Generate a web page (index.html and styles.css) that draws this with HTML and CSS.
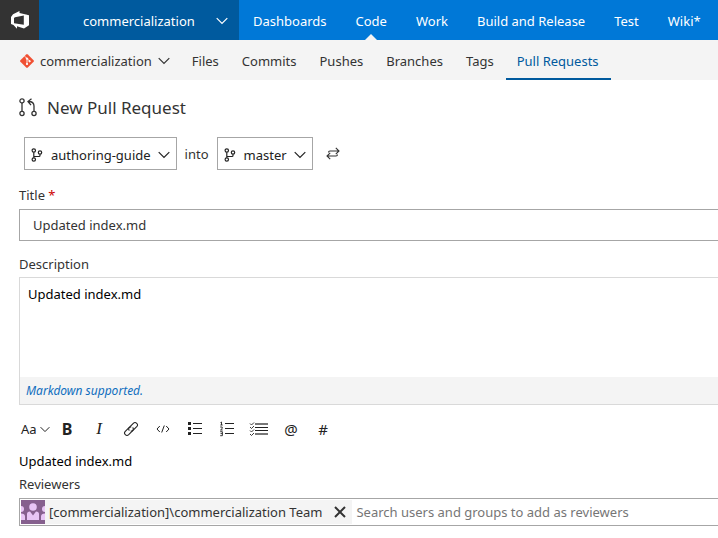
FILE: index.html
```html
<!DOCTYPE html>
<html lang="en">
<head>
<meta charset="utf-8">
<meta name="viewport" content="width=device-width, initial-scale=1">
<title>New Pull Request</title>
<link rel="stylesheet" href="styles.css">
</head>
<body>
<svg class="defs" aria-hidden="true">
  <symbol id="chevron" viewBox="0 0 12 8"><path d="M.7 1.200 6 6.500l5.300-5.300" fill="none" stroke="currentColor" stroke-width="1.200"/></symbol>
  <symbol id="branch" viewBox="0 0 12 14"><g fill="none" stroke="currentColor" stroke-width="1.200"><circle cx="2.800" cy="2.500" r="1.700"/><circle cx="2.800" cy="11.500" r="1.700"/><circle cx="9" cy="4.500" r="1.700"/><path d="M2.800 4.200v5.600M9 6.200v1.300q0 1-1 1H2.800"/></g></symbol>
</svg>
<header class="top">
  <a class="logo" href="#" aria-label="Home">
    <svg width="20" height="20" viewBox="0 0 20 20"><path fill="#fff" fill-rule="evenodd" d="M9.500 1v2L16 4.500l3 .8v10l-5 3.200-7-2.300v2.600L3.500 15l-2.500-1V7l2-2.700zM13.800 5.500 5 7.200 4 8v5.200l9.800 1.600z"/></svg>
  </a>
  <button class="project" type="button"><span>commercialization</span><svg class="chevron" width="12" height="8"><use href="#chevron"/></svg></button>
  <nav class="hubs" aria-label="Hubs">
    <a href="#">Dashboards</a>
    <a class="current" href="#">Code</a>
    <a href="#">Work</a>
    <a href="#">Build and Release</a>
    <a href="#">Test</a>
    <a href="#">Wiki*</a>
  </nav>
</header>
<div class="sub">
  <button class="repo" type="button">
    <svg width="14" height="14" viewBox="0 0 14 14"><path fill="#f05033" d="M6.200.4q.8-.7 1.600 0l5.800 5.800q.7.8 0 1.600l-5.800 5.800q-.8.700-1.600 0L.4 7.800q-.7-.8 0-1.600z"/><g fill="#fff" stroke="#fff"><path d="M4.800 2.300 7 4.500V10M7 4.500l2.500 2.500" fill="none" stroke-width=".9"/><circle cx="7" cy="4.600" r=".7"/><circle cx="7" cy="10" r=".7"/><circle cx="9.600" cy="7.200" r=".7"/></g></svg>
    <span>commercialization</span>
    <svg class="chevron" width="12" height="8"><use href="#chevron"/></svg>
  </button>
  <nav class="tabs" aria-label="Code">
    <a href="#">Files</a>
    <a href="#">Commits</a>
    <a href="#">Pushes</a>
    <a href="#">Branches</a>
    <a href="#">Tags</a>
    <a class="selected" href="#">Pull Requests</a>
  </nav>
</div>
<main>
  <h1>
    <svg width="18" height="20" viewBox="0 0 18 20"><g fill="none" stroke="currentColor" stroke-width="1.300"><circle cx="3" cy="2.900" r="2.100"/><circle cx="3" cy="15.500" r="2.100"/><circle cx="15" cy="15.500" r="2.100"/><path d="M3 5v8.400M15 13.400V8q0-4.500-5.500-4.500M12.500.8 9 3.500l3 3.600"/></g></svg>
    New Pull Request
  </h1>
  <div class="branches">
    <button class="picker" type="button"><svg width="12" height="14"><use href="#branch"/></svg><span>authoring-guide</span><svg class="chevron" width="12" height="8"><use href="#chevron"/></svg></button>
    <span class="into">into</span>
    <button class="picker" type="button"><svg width="12" height="14"><use href="#branch"/></svg><span>master</span><svg class="chevron" width="12" height="8"><use href="#chevron"/></svg></button>
    <button class="swap" type="button" aria-label="Swap branches"><svg width="14" height="14" viewBox="0 0 14 14"><path d="M2.500 5.500q0-1.500 1.500-1.500h9M9.800.8 13 4 9.800 7.200M11.500 7.500q0 1.500-1.500 1.500H1M4.200 5.800 1 9l3.200 3.200" fill="none" stroke="currentColor" stroke-width="1.100"/></svg></button>
  </div>
  <label class="label" for="title">Title <span class="required">*</span></label>
  <input class="title" id="title" type="text" value="Updated index.md" required>
  <label class="label" for="description">Description</label>
  <div class="editor">
    <textarea id="description">Updated index.md</textarea>
    <a class="hint" href="#">Markdown supported.</a>
  </div>
  <div class="toolbar" role="toolbar" aria-label="Formatting">
    <button class="size" type="button" aria-label="Header size">Aa<svg width="10" height="7"><use href="#chevron"/></svg></button>
    <button class="bold" type="button" aria-label="Bold">B</button>
    <button class="italic" type="button" aria-label="Italic">I</button>
    <button type="button" aria-label="Link"><svg width="16" height="16" viewBox="0 0 16 16"><g fill="none" stroke="currentColor" stroke-width="1.100"><path d="M6.300 9.700Q4.800 8 6.300 6.300l4-4q1.700-1.500 3.400 0t0 3.400L10 9.300q-1 1-2.300.7"/><path d="M9.700 6.300q1.500 1.700 0 3.400l-4 4q-1.700 1.500-3.400 0t0-3.400L6 6.700q1-1 2.300-.7"/></g></svg></button>
    <button type="button" aria-label="Code"><svg width="14" height="10" viewBox="0 0 14 10"><path d="M3.800 2 1 5l2.800 3M10.200 2 13 5l-2.800 3M8.300 1.500l-2.600 7" fill="none" stroke="currentColor"/></svg></button>
    <button type="button" aria-label="Bulleted list"><svg width="16" height="14" viewBox="0 0 16 14"><path fill="currentColor" d="M1 0h3v3H1zM1 5h3v3H1zM1 10h3v3H1zM6 1h9v1H6zM6 6h9v1H6zM6 11h9v1H6z"/></svg></button>
    <button type="button" aria-label="Numbered list"><svg width="16" height="16" viewBox="0 0 16 16"><path fill="currentColor" d="M6 2h9v1H6zM6 7h9v1H6zM6 12h9v1H6z"/><path d="M1.500 1.500 2.500 1v3M1.300 4h2.400M1.200 6h2v1.500L1.500 9h2.200M1.200 10.700h2.200v4H1.200M1.500 12.600h2" fill="none" stroke="currentColor" stroke-width=".9"/></svg></button>
    <button type="button" aria-label="Task list"><svg width="20" height="14" viewBox="0 0 20 14"><path fill="currentColor" d="M6 5h13v1H6zM6 8h13v1H6z"/><path fill="#777" d="M6 1h13v2H6zM6 11h13v2H6z"/><path d="M1 1.500 2.500 3 5 .5M1 5l1.500 1.500L5 4M1 8.500 2.500 10 5 7.500M1 12l1.500 1.500L5 11" fill="none" stroke="currentColor" stroke-width=".9"/></svg></button>
    <button class="glyph" type="button" aria-label="Mention">@</button>
    <button class="glyph" type="button" aria-label="Work item">#</button>
  </div>
  <p class="preview">Updated index.md</p>
  <label class="label" for="reviewers">Reviewers</label>
  <div class="reviewers">
    <div class="chip">
      <svg width="24" height="24" viewBox="0 0 24 24"><path fill="#86608e" d="M0 0h24v24H0z"/><g fill="#e8c5f5"><circle cx="12" cy="7" r="3.800"/><circle cx="0" cy="9" r="3"/><circle cx="24" cy="9" r="3"/><path d="M6 20v-6q0-2.500 3-2.500l3 4 3-4q3 0 3 2.500v6zM0 13.500q4 0 4 3V20H0zM24 13.500q-4 0-4 3V20h4z"/></g></svg>
      <span>[commercialization]\commercialization Team</span>
      <button type="button" aria-label="Remove reviewer"><svg width="12" height="12" viewBox="0 0 12 12"><path d="m1 1 10 10M11 1 1 11" stroke="currentColor" stroke-width="2"/></svg></button>
    </div>
    <input id="reviewers" type="text" placeholder="Search users and groups to add as reviewers">
  </div>
</main>
</body>
</html>
```
FILE: styles.css
```css
* { box-sizing: border-box; }
body {
  margin: 0;
  background: #fff;
  color: #333;
  font: 13px/20px "Noto Sans", "Open Sans", sans-serif;
}
button, input, textarea {
  margin: 0;
  padding: 0;
  border: 0;
  background: none;
  color: inherit;
  font: inherit;
}
a { color: inherit; text-decoration: none; }
svg { display: block; flex: none; }
.defs { position: absolute; width: 0; height: 0; }

.top { display: flex; height: 40px; background: #0078d7; color: #fff; overflow: hidden; }
.logo { display: grid; place-items: center; flex: none; width: 39px; background: #333; }
.project {
  display: flex;
  flex: none;
  align-items: center;
  justify-content: space-between;
  width: 200px;
  padding: 2px 11px 0 44px;
  background: #005a9e;
}
.hubs { display: flex; gap: 29px; padding-left: 14px; white-space: nowrap; }
.hubs a { display: flex; align-items: center; padding-top: 2px; }
.hubs .current { position: relative; }
.current::after {
  content: "";
  position: absolute;
  bottom: 0;
  left: calc(50% - 6px);
  border: 6px solid transparent;
  border-top: 0;
  border-bottom-color: #f4f4f4;
}

.sub { display: flex; height: 40px; background: #f4f4f4; white-space: nowrap; overflow: hidden; }
.repo { display: flex; flex: none; align-items: center; gap: 6px; padding: 2px 11px 0 20px; }
.tabs { display: flex; }
.tabs a { display: flex; align-items: center; padding: 4px 12px 0 11px; border-bottom: 2px solid transparent; }
.tabs .selected { border-color: #005a9e; color: #005a9e; }

main { padding: 16px 0 12px 19px; }
h1 { display: flex; align-items: center; gap: 10px; margin: 0; font-size: 17px; font-weight: 400; line-height: 24px; }
.branches { display: flex; align-items: center; gap: 8px; margin: 17px 0 15px 5px; }
.picker {
  display: flex;
  align-items: center;
  height: 33px;
  padding: 2px 6px 0;
  border: 1px solid #a6a6a6;
  color: #222;
}
.picker span { margin: 0 7px 0 8px; }
.swap { margin-left: 5px; }
.label { display: block; line-height: 20px; }
.required { color: #c00; }
.title {
  display: block;
  width: 100%;
  height: 32px;
  margin: 4px 0 13px;
  padding: 0 13px;
  border: 1px solid #a6a6a6;
  border-right: 0;
}
.editor { margin-top: 3px; border: 1px solid #d9d9d9; border-right: 0; }
textarea { display: block; width: 100%; height: 99px; padding: 6px 8px; color: #000; resize: none; outline: 0; }
.hint { display: block; height: 27px; padding: 0 6px; background: #f4f4f4; color: #106ebe; font-size: 12px; font-style: italic; line-height: 27px; }
.toolbar { display: flex; align-items: center; height: 32px; margin-top: 8px; color: #222; }
.toolbar button { display: grid; place-items: center; width: 32px; height: 32px; }
.toolbar .size { display: flex; align-items: center; gap: 3px; padding-left: 2px; }
.toolbar .bold { font-size: 16px; font-weight: 700; }
.toolbar .italic { font: italic 17px "Liberation Serif", serif; }
.toolbar .glyph { font-size: 15px; }
.preview { margin: 6px 0 3px; color: #000; }
.reviewers { display: flex; height: 28px; margin-top: 4px; padding: 1px; border: 1px solid #a6a6a6; border-right: 0; }
.chip { display: flex; flex: none; align-items: center; gap: 4px; padding-right: 6px; background: #f4f4f4; }
.chip button { padding: 0 0 0 8px; }
.reviewers input { flex: 1; min-width: 0; padding-left: 4px; outline: 0; }
.reviewers input::placeholder { color: #767676; opacity: 1; }
```
